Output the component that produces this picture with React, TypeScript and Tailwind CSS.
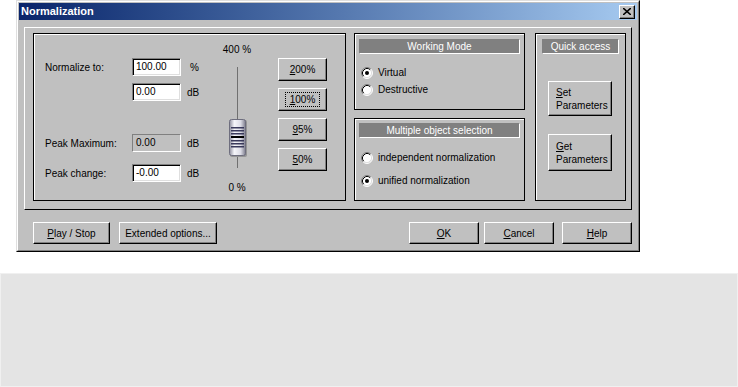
import type { ReactNode } from "react";

const raised =
  "border border-t-white border-l-white border-r-black border-b-black shadow-[inset_-1px_-1px_0_#808080] bg-[#c0c0c0]";

function Btn({ children, className = "", focus = false }: { children: ReactNode; className?: string; focus?: boolean }) {
  return (
    <div className={`${raised} flex items-center justify-center text-black ${className}`}>
      {focus ? <span className="border border-dotted border-black px-[4px] leading-[13px]">{children}</span> : children}
    </div>
  );
}

function Field({ value, disabled = false }: { value: string; disabled?: boolean }) {
  const cls = disabled
    ? "border border-[#808080] border-b-white border-r-white bg-[#c0c0c0]"
    : "border border-t-[#808080] border-l-[#808080] border-b-white border-r-white shadow-[inset_1px_1px_0_#000,inset_-1px_-1px_0_#dfdfdf] bg-white";
  return <div className={`${cls} flex h-[18px] w-[49px] items-center pl-[3px] leading-none`}>{value}</div>;
}

function Radio({ checked, label }: { checked?: boolean; label: string }) {
  return (
    <div className="flex h-[13px] items-center gap-[5px]">
      <svg width="12" height="12" viewBox="0 0 12 12" className="shrink-0">
        <circle cx="6" cy="6" r="5" fill="#fff" />
        <path d="M2.11 9.89A5.5 5.5 0 0 1 9.89 2.11" fill="none" stroke="#808080" />
        <path d="M2.82 9.18A4.5 4.5 0 0 1 9.18 2.82" fill="none" stroke="#000" />
        <path d="M9.89 2.11A5.5 5.5 0 0 1 2.11 9.89" fill="none" stroke="#fff" />
        <path d="M9.18 2.82A4.5 4.5 0 0 1 2.82 9.18" fill="none" stroke="#dfdfdf" />
        {checked && <circle cx="6" cy="6" r="2" fill="#000" />}
      </svg>
      <span>{label}</span>
    </div>
  );
}

function Header({ children, className = "" }: { children: ReactNode; className?: string }) {
  return (
    <div
      className={`flex h-[15px] items-center justify-center border border-t-[#808080] border-l-[#808080] border-b-white border-r-white bg-[#808080] text-white ${className}`}
    >
      {children}
    </div>
  );
}

const panel = "border border-black shadow-[inset_1px_1px_0_#fff]";

function Thumb() {
  return (
    <svg width="18" height="38" viewBox="0 0 18 38">
      <defs>
        <linearGradient id="tg" x1="0" x2="1" y1="0" y2="0">
          <stop offset="0" stopColor="#8e8e9e" />
          <stop offset="0.3" stopColor="#f6f6fa" />
          <stop offset="0.7" stopColor="#dcdce6" />
          <stop offset="1" stopColor="#7c7c8c" />
        </linearGradient>
      </defs>
      <rect x="1" y="1" width="17" height="37" rx="2" fill="#6a6a6a" opacity="0.5" />
      <rect x="0.5" y="0.5" width="16" height="36" rx="2" fill="url(#tg)" stroke="#6e6e7e" />
      {[8, 11, 14, 21, 24, 27].map((y) => (
        <rect key={y} x="2" y={y} width="13" height="1.5" fill="#3a3a5c" />
      ))}
      <rect x="2" y="17" width="13" height="2" fill="#000" />
    </svg>
  );
}

export default function App() {
  return (
    <div className="h-[387px] w-[738px] bg-white font-['Liberation_Sans',Arial,sans-serif] text-[10px] text-black">
      <div className="ml-4 h-[252px] w-[624px] border border-t-[#dfdfdf] border-l-[#dfdfdf] border-r-black border-b-black bg-[#c0c0c0]">
        <div className="h-full border border-t-white border-l-white border-r-[#808080] border-b-[#808080] p-px">
          <div className="flex h-[17px] items-center justify-between bg-linear-to-r from-[#0a246a] to-[#a6caf0] pl-[2px] pr-[2px]">
            <span className="text-[11px] font-bold text-white">Normalization</span>
            <div className={`${raised} flex h-[14px] w-[16px] items-center justify-center`}>
              <svg width="8" height="7" viewBox="0 0 8 7">
                <path d="M0 0L8 7M8 0L0 7" stroke="#000" strokeWidth="1.6" />
              </svg>
            </div>
          </div>

          <div className="ml-[5px] mt-[7px] flex h-[183px] w-[608px] gap-[8px] border border-t-white border-l-white border-r-black border-b-black pl-[8px] pt-[5px]">
            <div className={`${panel} flex h-[168px] w-[313px]`}>
              <div className="ml-[11px] flex w-[170px] flex-col pt-[24px]">
                <div className="flex items-center">
                  <span className="w-[87px]">Normalize to:</span>
                  <Field value="100.00" />
                  <span className="ml-[9px]">%</span>
                </div>
                <div className="mt-[7px] flex items-center">
                  <span className="w-[87px]" />
                  <Field value="0.00" />
                  <span className="ml-[6px]">dB</span>
                </div>
                <div className="mt-[33px] flex items-center">
                  <span className="w-[87px]">Peak Maximum:</span>
                  <Field value="0.00" disabled />
                  <span className="ml-[6px]">dB</span>
                </div>
                <div className="mt-[12px] flex items-center">
                  <span className="w-[87px]">Peak change:</span>
                  <Field value="-0.00" />
                  <span className="ml-[6px]">dB</span>
                </div>
              </div>

              <div className="flex w-[44px] flex-col items-center pt-[10px]">
                <span className="leading-[12px]">400 %</span>
                <div className="mt-[11px] h-[52px] w-px bg-[#707070]" />
                <div className="pl-[1px]">
                  <Thumb />
                </div>
                <div className="h-[11px] w-px bg-[#707070]" />
                <span className="mt-[14px] leading-[12px]">0 %</span>
              </div>

              <div className="ml-[19px] flex flex-col gap-[7px] pt-[24px]">
                <Btn className="h-[23px] w-[49px]">
                  <span><u>2</u>00%</span>
                </Btn>
                <Btn className="h-[23px] w-[49px]" focus>
                  <span><u>1</u>00%</span>
                </Btn>
                <Btn className="h-[23px] w-[49px]">
                  <span><u>9</u>5%</span>
                </Btn>
                <Btn className="h-[23px] w-[49px]">
                  <span><u>5</u>0%</span>
                </Btn>
              </div>
            </div>

            <div className="flex w-[171px] flex-col gap-[8px]">
              <div className={`${panel} h-[77px] px-[4px] pt-[5px]`}>
                <Header>Working Mode</Header>
                <div className="mt-[12px] pl-[2px]">
                  <Radio checked label="Virtual" />
                </div>
                <div className="mt-[4px] pl-[2px]">
                  <Radio label="Destructive" />
                </div>
              </div>
              <div className={`${panel} h-[83px] px-[4px] pt-[4px]`}>
                <Header>Multiple object selection</Header>
                <div className="mt-[13px] pl-[2px]">
                  <Radio label="independent normalization" />
                </div>
                <div className="mt-[10px] pl-[2px]">
                  <Radio checked label="unified normalization" />
                </div>
              </div>
            </div>

            <div className={`${panel} ml-[2px] h-[168px] w-[91px] px-[6px] pt-[5px]`}>
              <Header>Quick access</Header>
              <div className={`${raised} ml-[6px] mt-[27px] flex h-[35px] w-[64px] flex-col justify-center pl-[7px] leading-[13px]`}>
                <span><u>S</u>et</span>
                <span>Parameters</span>
              </div>
              <div className={`${raised} ml-[6px] mt-[18px] flex h-[37px] w-[64px] flex-col justify-center pl-[7px] leading-[13px]`}>
                <span><u>G</u>et</span>
                <span>Parameters</span>
              </div>
            </div>
          </div>

          <div className="mt-[12px] flex h-[22px] pl-[14px] pr-[5px]">
            <Btn className="h-[22px] w-[77px]">
              <span><u>P</u>lay / Stop</span>
            </Btn>
            <Btn className="ml-[9px] h-[22px] w-[98px]">Extended options...</Btn>
            <Btn className="ml-auto h-[22px] w-[70px]">
              <span><u>O</u>K</span>
            </Btn>
            <Btn className="ml-[5px] h-[22px] w-[70px]">
              <span><u>C</u>ancel</span>
            </Btn>
            <Btn className="ml-[8px] h-[22px] w-[70px]">
              <span><u>H</u>elp</span>
            </Btn>
          </div>
        </div>
      </div>

      <div className="mt-[21px] h-[114px] w-[738px] border border-[#f0f0f0] bg-[#e4e4e4]" />
    </div>
  );
}
